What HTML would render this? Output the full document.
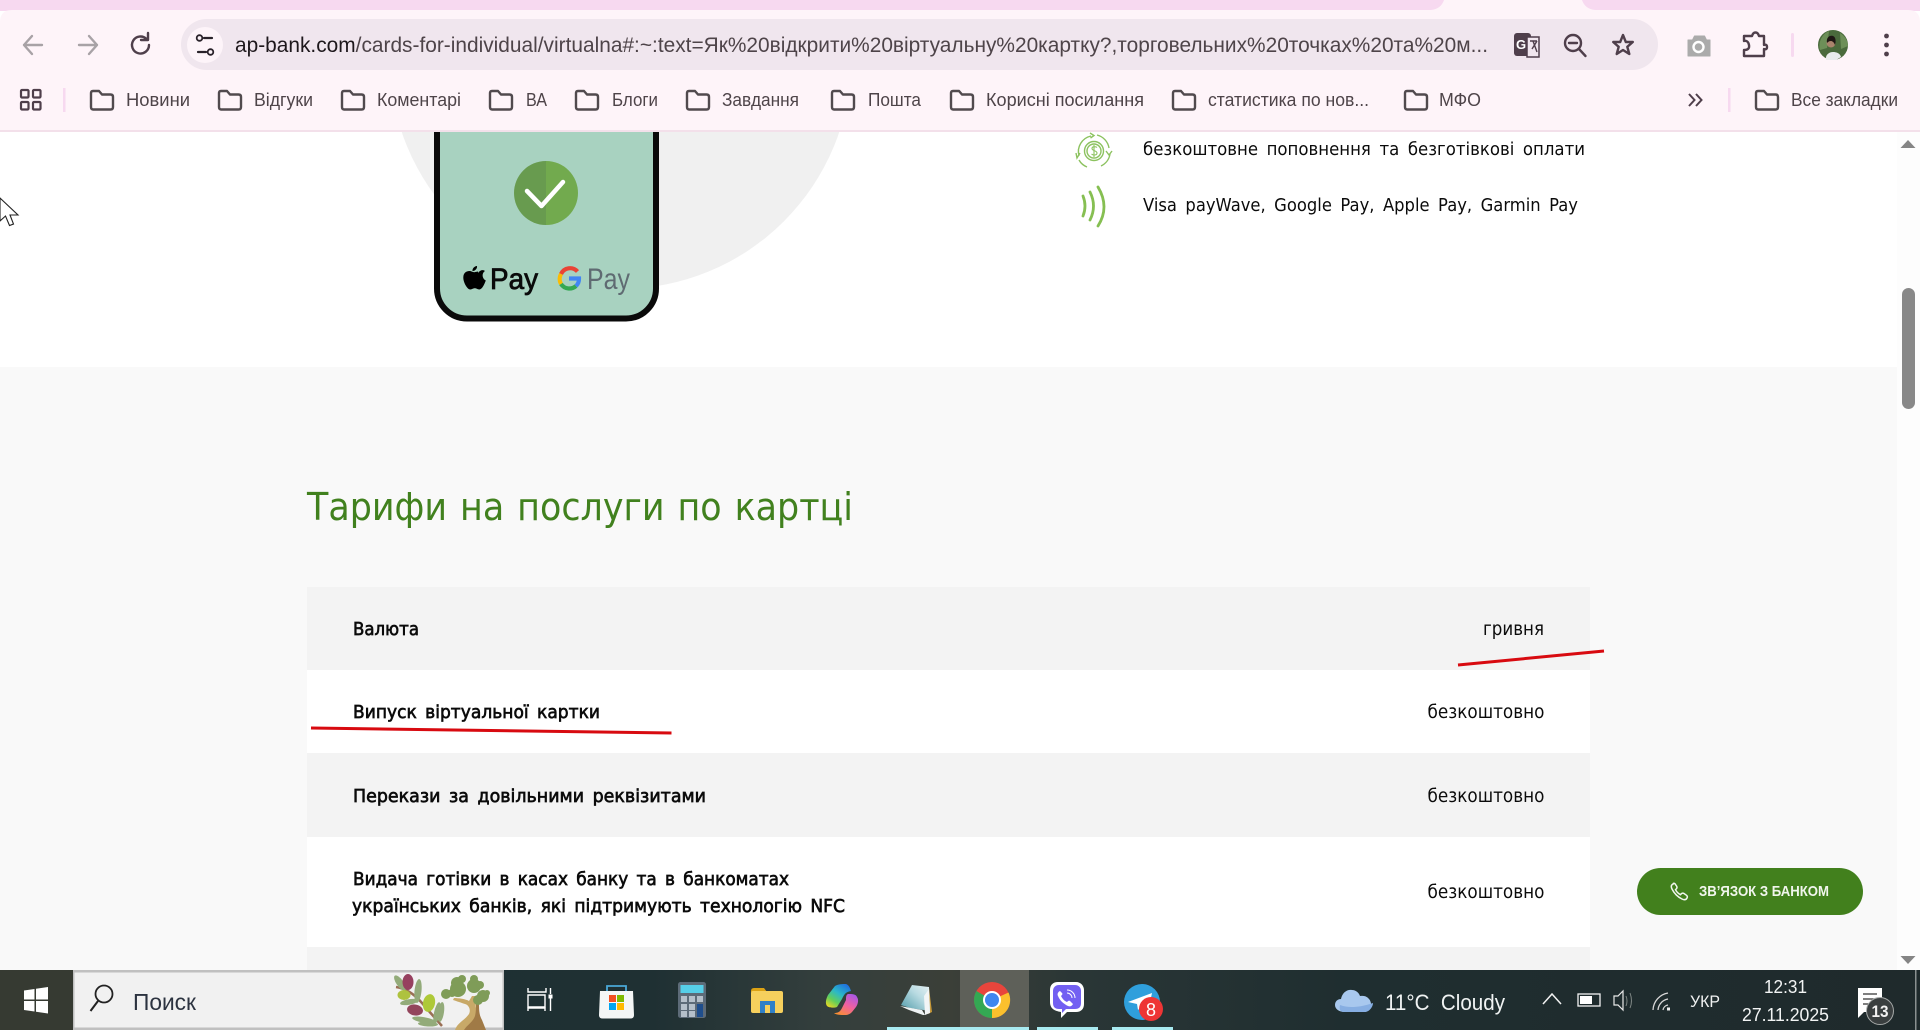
<!DOCTYPE html>
<html lang="uk">
<head>
<meta charset="utf-8">
<title>ap-bank.com</title>
<style>
html,body{margin:0;padding:0;width:1920px;height:1030px;overflow:hidden;background:#fff}
svg{display:block;position:absolute;left:0;top:0}
text{font-family:"Liberation Sans","Noto Sans CJK SC",sans-serif}
.o{font-family:"DejaVu Sans","Liberation Sans",sans-serif;fill:#0b0b0b}
.b{font-family:"DejaVu Sans","Liberation Sans",sans-serif;fill:#0b0b0b;stroke:#0b0b0b;stroke-width:.65px}
.bm{font-size:18px;fill:#4e4449}
.ic{fill:none;stroke:#4f3f4b;stroke-width:2.4;stroke-linecap:round;stroke-linejoin:round}
</style>
</head>
<body>
<svg width="1920" height="1030" viewBox="0 0 1920 1030" xmlns="http://www.w3.org/2000/svg">
<defs>
<symbol id="f" viewBox="0 0 25 22" overflow="visible"><path d="M2 4.5Q2 2 4 2H10L13 5.5H21.500Q24 5.500 24 8V18Q24 20.500 21.500 20.500H4Q2 20.500 2 18Z" fill="none" stroke="#514a4e" stroke-width="2.400" stroke-linejoin="round"/></symbol>
<linearGradient id="tg" x1="0" x2="1" y1="0" y2="0">
<stop offset="0" stop-color="#1d2f33"/><stop offset=".34" stop-color="#1f3033"/><stop offset=".43" stop-color="#343f3d"/><stop offset=".495" stop-color="#3b3f38"/><stop offset=".56" stop-color="#2a3636"/><stop offset=".7" stop-color="#1f2e30"/><stop offset="1" stop-color="#1f2a2c"/></linearGradient>
<linearGradient id="cp1" x1=".8" x2=".1" y1="0" y2="1"><stop offset="0" stop-color="#1f6fe0"/><stop offset=".4" stop-color="#2bb8c8"/><stop offset=".7" stop-color="#62cf5a"/><stop offset="1" stop-color="#f4d820"/></linearGradient>
<linearGradient id="cp2" x1=".8" x2=".2" y1="0" y2="1"><stop offset="0" stop-color="#a858e8"/><stop offset=".5" stop-color="#f060a0"/><stop offset="1" stop-color="#f89030"/></linearGradient>
<linearGradient id="np" x1="0" x2="1" y1="1" y2="0"><stop offset="0" stop-color="#4f9aa8"/><stop offset=".6" stop-color="#b9dbe2"/><stop offset="1" stop-color="#e8f2f4"/></linearGradient>
</defs>

<!-- page -->
<rect x="0" y="130" width="1920" height="840" fill="#fff"/>
<circle cx="620.500" cy="58" r="231" fill="#f0f0f0"/>
<rect x="437" y="100" width="219" height="218.500" rx="30" fill="#a8d2c0" stroke="#0a0a0a" stroke-width="6"/>
<path d="M546 161a32 32 0 0 0 0 64z" fill="#689b4f"/>
<path d="M546 161a32 32 0 0 1 0 64z" fill="#72aa4e"/>
<path d="M527 191L541.500 206L563 182" fill="none" stroke="#fff" stroke-width="4.500" stroke-linecap="round" stroke-linejoin="round"/>
<path d="M478 273c2-3 5-3.500 7-2-3 1.800-3.500 7 .8 9.500-1.500 4-3.800 9-6.500 9-1.800 0-2.500-1.200-4.500-1.200s-2.800 1.200-4.500 1.200c-3 0-7-7-7-12 0-5 3.500-6.500 6-6.500 2 0 3.500 1.200 4.800 1.200 1 0 2-.5 4-.7z M477 266c.5 2.500-2 5.200-4.500 5-.4-2.400 2-5 4.500-5z" fill="#000"/>
<text x="490" y="289" font-size="30" fill="#0a0a0a" stroke="#0a0a0a" stroke-width=".8" textLength="48" lengthAdjust="spacingAndGlyphs">Pay</text>
<g fill="none" stroke-width="4.200">
<path d="M577.500 271.500A10 10 0 0 0 561 274" stroke="#ea4335"/>
<path d="M561 274A10 10 0 0 0 561 284" stroke="#fbbc04"/>
<path d="M561 284A10 10 0 0 0 576 286" stroke="#34a853"/>
<path d="M576 286A10 10 0 0 0 579 278.500H569" stroke="#4285f4"/>
</g>
<text x="587" y="289" font-size="30" fill="#5f6b72" textLength="43" lengthAdjust="spacingAndGlyphs">Pay</text>

<!-- feature icons -->
<g fill="none" stroke="#8cc25f" stroke-width="1.400">
<circle cx="1094" cy="151" r="9.500"/>
<circle cx="1094" cy="151" r="7"/>
<path d="M1094 145v12M1097 147.500c-1-1-5-1.500-5 1s5 2 5 4.500-4 2.500-5.500 1" stroke-width="1.100"/>
<path d="M1079 156a16 16 0 0 1 12-20M1097 135a16 16 0 0 1 12 13M1110 154a16 16 0 0 1-9 12M1087 167a16 16 0 0 1-8-7M1090 133l4 2.500-3.500 2.500M1106 151l3 4 3-4M1080 153l-3 5-1-5"/>
</g>
<g fill="none" stroke="#86bf52" stroke-width="2.800" stroke-linecap="round">
<path d="M1083 196q4 10 0 20M1090 192q7 14 0 28M1098 187q12 20 0 39"/>
</g>
<text class="o" x="1143" y="155" font-size="17.500" word-spacing="3.500" textLength="442" lengthAdjust="spacingAndGlyphs">безкоштовне поповнення та безготівкові оплати</text>
<text class="o" x="1143" y="211" font-size="17.500" word-spacing="3.500" textLength="435" lengthAdjust="spacingAndGlyphs">Visa payWave, Google Pay, Apple Pay, Garmin Pay</text>

<!-- tariff section -->
<rect x="0" y="367" width="1897" height="603" fill="#f9f9f9"/>
<rect x="1897" y="132" width="23" height="838" fill="#fdfdfd"/>
<text x="307" y="520" font-size="38" fill="#41811e" word-spacing="2" textLength="546" lengthAdjust="spacingAndGlyphs" style="font-family:'DejaVu Sans',sans-serif;font-weight:400">Тарифи на послуги по картці</text>
<rect x="307" y="587" width="1283" height="83" fill="#f3f3f3"/>
<rect x="307" y="670" width="1283" height="83" fill="#fff"/>
<rect x="307" y="753" width="1283" height="84" fill="#f3f3f3"/>
<rect x="307" y="837" width="1283" height="110" fill="#fff"/>
<rect x="307" y="947" width="1283" height="23" fill="#f3f3f3"/>
<text class="b" x="353" y="635" font-size="17.500" textLength="66" lengthAdjust="spacingAndGlyphs">Валюта</text>
<text class="b" x="353" y="718" font-size="17.500" word-spacing="3" textLength="247" lengthAdjust="spacingAndGlyphs">Випуск віртуальної картки</text>
<text class="b" x="353" y="802" font-size="17.500" word-spacing="3" textLength="353" lengthAdjust="spacingAndGlyphs">Перекази за довільними реквізитами</text>
<text class="b" x="353" y="885" font-size="17.500" word-spacing="3" textLength="436" lengthAdjust="spacingAndGlyphs">Видача готівки в касах банку та в банкоматах</text>
<text class="b" x="352" y="912" font-size="17.500" word-spacing="3" textLength="493" lengthAdjust="spacingAndGlyphs">українських банків, які підтримують технологію NFC</text>
<text class="o" x="1483" y="635" font-size="18.500" textLength="61" lengthAdjust="spacingAndGlyphs">гривня</text>
<text class="o" x="1427.500" y="718" font-size="18.500" textLength="117" lengthAdjust="spacingAndGlyphs">безкоштовно</text>
<text class="o" x="1427.500" y="802" font-size="18.500" textLength="117" lengthAdjust="spacingAndGlyphs">безкоштовно</text>
<text class="o" x="1427.500" y="898" font-size="18.500" textLength="117" lengthAdjust="spacingAndGlyphs">безкоштовно</text>
<path d="M311 728L671.500 733" stroke="#d80a10" stroke-width="3"/>
<path d="M1458 665L1604 651" stroke="#d80a10" stroke-width="3"/>

<!-- contact button -->
<rect x="1637" y="868" width="226" height="47" rx="23.500" fill="#42801d"/>
<path d="M1673 884c-2 1-2 3-1 5 2 4 6 8 10 10 2 1 4 1 5-1 .6-1 .4-2-.5-2.700l-2.500-1.800c-1-.6-2-.5-2.800.4l-.7.8c-2-1-4-3-5-5l.8-.8c.8-.8.9-1.800.3-2.800l-1.600-2.300c-.7-.8-1.800-.7-2 .2z" fill="none" stroke="#f1f6ee" stroke-width="1.500"/>
<text x="1699" y="896" font-size="15" font-weight="700" fill="#f0f5ec" textLength="130" lengthAdjust="spacingAndGlyphs">ЗВ’ЯЗОК З БАНКОМ</text>

<!-- scrollbar -->
<path d="M1908 140l7.500 8h-15z" fill="#858585"/>
<rect x="1902" y="288" width="13" height="121" rx="6.500" fill="#888"/>
<path d="M1908 964l7.500-8h-15z" fill="#858585"/>

<!-- cursor -->
<path d="M0 198L18 215H10L13.500 224L9.500 225.500L5.500 216L0 221Z" fill="#fff" stroke="#222" stroke-width="1.100"/>

<!-- browser chrome -->
<rect x="0" y="0" width="1920" height="11" fill="#f7d9f0"/>
<path d="M0 130V22Q0 10 12 10H1908Q1920 10 1920 22V130Z" fill="#fef4f9"/>
<path d="M1431 10Q1441 9 1444 0H1582Q1585 9 1595 10Z" fill="#fef4f9"/>
<rect x="0" y="130" width="1920" height="2" fill="#f3e0ea"/>
<rect x="181" y="19" width="1477" height="51" rx="25.500" fill="#f0e6ee"/>
<circle cx="205" cy="45" r="18" fill="#fdf4f9"/>

<!-- nav -->
<g fill="none" stroke-width="2.400" stroke-linecap="round" stroke-linejoin="round">
<path d="M42 45H24M32 36L24 45L32 54" stroke="#a8a2a6"/>
<path d="M79 45H97M89 36L97 45L89 54" stroke="#a8a2a6"/>
<path d="M149 45a8.500 8.500 0 1 1-2.500-6M148 33v7h-7" stroke="#4f3f4b"/>
<path d="M204 38h8M198 52h8" stroke="#29222a" stroke-width="2.200"/>
<circle cx="199.500" cy="38" r="2.800" stroke="#29222a" stroke-width="1.800"/>
<circle cx="210.500" cy="52" r="2.800" stroke="#29222a" stroke-width="1.800"/>
</g>
<text x="235" y="52" font-size="21" fill="#4e4449" textLength="1253" lengthAdjust="spacingAndGlyphs"><tspan fill="#1e181c">ap-bank.com</tspan>/cards-for-individual/virtualna#:~:text=Як%20відкрити%20віртуальну%20картку?,торговельних%20точках%20та%20м...</text>

<!-- right toolbar icons -->
<path d="M1517 33h11a3 3 0 0 1 3 3v20h-14a3 3 0 0 1-3-3V36a3 3 0 0 1 3-3z" fill="#4f3f4b"/>
<rect x="1527" y="37" width="12" height="20" fill="#f0e6ee" stroke="#4f3f4b" stroke-width="1.500"/>
<text x="1516" y="49" font-size="13" font-weight="700" fill="#fff">G</text>
<path d="M1530 41h7M1533 41l4 11M1537 41l-5 8" stroke="#4f3f4b" stroke-width="1.400" fill="none"/>
<g class="ic"><circle cx="1573" cy="43" r="8"/><path d="M1569 43h8M1579 49l6.500 7"/><path d="M1623 35l2.800 7h7l-5.500 4.800 2 7.200-6.300-4-6.300 4 2-7.200-5.500-4.800h7z"/></g>
<path d="M1688 40h4.500l2-4h10l2 4h3.500v16h-22z" fill="#ababab" stroke="#ababab" stroke-width="1" stroke-linejoin="round"/>
<circle cx="1698.500" cy="47" r="5" fill="#ababab" stroke="#fff" stroke-width="2.400"/>
<path class="ic" d="M1744 36h8q1-3.500 3.500-3.500T1759 36h5v9q3-1 3 2t-3 2v7h-20v-6q6 0 5-5t-5-4z"/>
<rect x="1791" y="33" width="3" height="24" fill="#f7d9f0" rx="1.500"/>
<circle cx="1833" cy="45" r="15" fill="#4a6a3c"/>
<path d="M1820 50c-2-8 2-16 9-19l-2 17zM1840 33c5 3 8 8 8 13l-7 3z" fill="#6d8f58"/>
<path d="M1826 60c-1-5 3-8 7-8 3 0 7 1 8 5l-5 3z" fill="#e9ecec"/>
<circle cx="1831" cy="43" r="4.500" fill="#a9836c"/>
<path d="M1827 43c-1-6 3-8 6-7 3 1 3 6 2 9-1-3-3-4-4-4-2 0-3 1-4 2z" fill="#1f1714"/>
<g fill="#4f3f4b"><circle cx="1886.500" cy="36" r="2.400"/><circle cx="1886.500" cy="45" r="2.400"/><circle cx="1886.500" cy="54" r="2.400"/></g>

<!-- bookmarks -->
<g fill="none" stroke="#4f3f4b" stroke-width="2.200"><rect x="21" y="90" width="7.500" height="7.500" rx="1"/><rect x="33" y="90" width="7.500" height="7.500" rx="1"/><rect x="21" y="102" width="7.500" height="7.500" rx="1"/><rect x="33" y="102" width="7.500" height="7.500" rx="1"/></g>
<rect x="63" y="88" width="2.500" height="24" fill="#f7d9f0"/>
<use href="#f" x="89" y="89" width="25" height="22"/>
<text class="bm" x="126" y="106" textLength="64" lengthAdjust="spacingAndGlyphs">Новини</text>
<use href="#f" x="217" y="89" width="25" height="22"/>
<text class="bm" x="254" y="106" textLength="59" lengthAdjust="spacingAndGlyphs">Відгуки</text>
<use href="#f" x="340" y="89" width="25" height="22"/>
<text class="bm" x="377" y="106" textLength="84" lengthAdjust="spacingAndGlyphs">Коментарі</text>
<use href="#f" x="488" y="89" width="25" height="22"/>
<text class="bm" x="526" y="106" textLength="21" lengthAdjust="spacingAndGlyphs">ВА</text>
<use href="#f" x="574" y="89" width="25" height="22"/>
<text class="bm" x="612" y="106" textLength="46" lengthAdjust="spacingAndGlyphs">Блоги</text>
<use href="#f" x="685" y="89" width="25" height="22"/>
<text class="bm" x="722" y="106" textLength="77" lengthAdjust="spacingAndGlyphs">Завдання</text>
<use href="#f" x="830" y="89" width="25" height="22"/>
<text class="bm" x="868" y="106" textLength="53" lengthAdjust="spacingAndGlyphs">Пошта</text>
<use href="#f" x="949" y="89" width="25" height="22"/>
<text class="bm" x="986" y="106" textLength="158" lengthAdjust="spacingAndGlyphs">Корисні посилання</text>
<use href="#f" x="1171" y="89" width="25" height="22"/>
<text class="bm" x="1208" y="106" textLength="161" lengthAdjust="spacingAndGlyphs">статистика по нов...</text>
<use href="#f" x="1403" y="89" width="25" height="22"/>
<text class="bm" x="1439" y="106" textLength="42" lengthAdjust="spacingAndGlyphs">МФО</text>
<path d="M1689 94l5.500 6-5.500 6M1696 94l5.500 6-5.500 6" fill="none" stroke="#4f3f4b" stroke-width="2"/>
<rect x="1728" y="88" width="2.500" height="24" fill="#f7d9f0"/>
<use href="#f" x="1754" y="89" width="25" height="22"/>
<text class="bm" x="1791" y="106" textLength="107" lengthAdjust="spacingAndGlyphs">Все закладки</text>

<!-- taskbar -->
<rect x="0" y="970" width="1920" height="60" fill="url(#tg)"/>
<rect x="0" y="970" width="73" height="60" fill="#363a32"/>
<g fill="#fff"><path d="M24 990.500l10.500-1.500v10.500H24zM36 988.800l12-1.800v12.500H36zM24 1001h10.500v10.500L24 1010zM36 1001h12v12.500l-12-1.800z"/></g>
<rect x="73" y="970" width="431" height="60" fill="#f1f1f1"/>
<rect x="73" y="970" width="431" height="2.500" fill="#c0c0c0"/>
<rect x="73" y="1027.500" width="431" height="2.500" fill="#c0c0c0"/>
<rect x="73" y="970" width="1.500" height="60" fill="#c0c0c0"/>
<rect x="502.500" y="970" width="1.500" height="60" fill="#c0c0c0"/>
<circle cx="104" cy="994" r="8.500" fill="none" stroke="#222" stroke-width="1.800"/>
<path d="M98 1001L90.500 1011" stroke="#222" stroke-width="2"/>
<text x="133" y="1010" font-size="23" fill="#2c3340" textLength="63" lengthAdjust="spacingAndGlyphs">Поиск</text>

<!-- olive branch -->
<path d="M396 987q14 2 26 16t20 23" stroke="#9a6f55" stroke-width="2.500" fill="none"/>
<g fill="#93ab7a"><ellipse cx="400" cy="983" rx="3.500" ry="9" transform="rotate(-35 400 983)"/><ellipse cx="418" cy="991" rx="3.500" ry="12" transform="rotate(6 418 991)"/><ellipse cx="409" cy="1002" rx="9" ry="2.800" transform="rotate(-10 409 1002)"/><ellipse cx="437" cy="1013" rx="3" ry="11" transform="rotate(12 437 1013)"/><ellipse cx="441" cy="1012" rx="3" ry="10" transform="rotate(8 441 1012)"/><ellipse cx="424" cy="1020" rx="12" ry="2.800" transform="rotate(10 424 1020)"/><ellipse cx="428" cy="1024" rx="10" ry="2.500" transform="rotate(3 428 1024)"/></g>
<ellipse cx="408" cy="982" rx="5.500" ry="8" fill="#96405f"/>
<ellipse cx="404" cy="995" rx="6.500" ry="5" fill="#aec23e"/>
<ellipse cx="429" cy="1003" rx="6" ry="9" fill="#aec938" transform="rotate(12 429 1003)"/>
<ellipse cx="415" cy="1010" rx="8" ry="5.500" fill="#93455c" transform="rotate(10 415 1010)"/>
<!-- olive tree -->
<path d="M455 1030c2-7 10-10 14-16 2-4 0-9-4-10-3-1-9-3-12-4l1-2c4 0 12 1 15 3l3-5h6c-1 5-3 8-2 12 0 6 3 14 8 22z" fill="#c8a968"/>
<path d="M464 1030c3-5 9-8 11-14 1-4 1-8 1-12l3-1c0 6 0 12 3 17l4 10z" fill="#a07a46"/>
<g fill="#7f9c58"><circle cx="446" cy="994" r="5"/><circle cx="452" cy="993" r="4"/><ellipse cx="458" cy="989" rx="8" ry="8"/><ellipse cx="457" cy="983" rx="6" ry="6"/><circle cx="462" cy="979" r="4"/><circle cx="474" cy="986" r="7"/><circle cx="474" cy="979" r="4"/><circle cx="480" cy="985" r="4"/><circle cx="483" cy="996" r="6"/><circle cx="478" cy="1000" r="5"/><circle cx="487" cy="993" r="3"/></g>

<!-- task view -->
<g fill="none" stroke="#fff" stroke-width="1.400"><path d="M528 988v4h18v-4"/><path d="M528 995h17v12h-17z"/><path d="M528 1011v-3h17v3"/></g>
<path d="M550.500 988v6M550.500 998v13" stroke="#fff" stroke-width="1.400"/><rect x="548.500" y="994.500" width="4" height="4" fill="#fff"/>

<!-- store -->
<path d="M607 991v-5h19v5" fill="none" stroke="#4aa8d8" stroke-width="1.800"/>
<path d="M600 991h33l1 24q0 3.500-3.500 3.500h-28q-3.500 0-3.500-3.500z" fill="#f4f6f6"/>
<rect x="609" y="995" width="7" height="7" fill="#f25022"/><rect x="617" y="995" width="7" height="7" fill="#7fba00"/><rect x="609" y="1003" width="7" height="7" fill="#00a4ef"/><rect x="617" y="1003" width="7" height="7" fill="#ffb900"/>

<!-- calculator -->
<rect x="678" y="982" width="28" height="36" rx="2.500" fill="#5d6b78"/>
<rect x="680.500" y="985" width="23" height="8" fill="#56cfe8"/>
<g fill="#b5c0ca"><rect x="681" y="996" width="6" height="6"/><rect x="689" y="996" width="6" height="6"/><rect x="697" y="996" width="6" height="6"/><rect x="681" y="1004" width="6" height="6"/><rect x="689" y="1004" width="6" height="6"/><rect x="681" y="1011" width="6" height="6"/><rect x="689" y="1011" width="6" height="6"/></g>
<rect x="697" y="1004" width="6" height="13" fill="#1f4e8c"/>

<!-- folder -->
<path d="M751 991q0-3 3-3h10l3 4h-16z" fill="#dca214"/>
<rect x="751" y="991" width="32" height="22" rx="2" fill="#f6d05d"/>
<rect x="760" y="1001" width="15" height="12" fill="#2f80c8"/>
<rect x="765" y="1005" width="5" height="8" fill="#f6d05d"/>

<!-- copilot -->
<path d="M835 986c3-2 8-2 11-2 3 1 4 4 5 7-6 1-7 4-9 8l-5 8c-2 1-8 1-10-1-2-3-1-7 1-11z" fill="url(#cp1)"/>
<path d="M848 994c4 0 8 0 9 3 2 3 1 7-1 10l-4 5c-2 2-4 3-7 3-4 0-9 0-11-2 4 0 6-1 8-5l4-8c0-3 0-5 2-6z" fill="url(#cp2)"/>

<!-- notepad -->
<path d="M929 988l3 24-4 2z" fill="#c89a3a"/>
<path d="M912 985l17 2 1 24-20-3-9-3z" fill="url(#np)"/>
<path d="M900 1006l22 4 3 5-2 0-14-5z" fill="#eef3f4"/>
<path d="M924 996l5-7 1 24-5 2z" fill="#f2f5f6"/>
<rect x="887" y="1027" width="74" height="3" fill="#a8eaf0"/>

<!-- chrome -->
<rect x="960" y="970" width="69" height="60" fill="#5e6059"/>
<rect x="960" y="1027" width="69" height="3" fill="#a8eaf0"/>
<circle cx="992" cy="1000" r="18" fill="#e8453c"/>
<path d="M976.400 991L992 1000L992 1018A18 18 0 0 1 976.400 991z" fill="#34a853"/>
<path d="M1008.500 992.500L992 1000L992 1018A18 18 0 0 0 1008.500 992.500z" fill="#fbc02d"/>
<circle cx="992" cy="1000" r="9" fill="#fff"/>
<circle cx="992" cy="1000" r="7" fill="#3f86ee"/>

<!-- viber -->
<path d="M1058 982h18c5 0 8 4 8 8v14c0 5-3 8-8 8h-9l-6 6v-6c-6-1-11-3-11-10V990c0-5 3-8 8-8z" fill="#fff"/>
<path d="M1059 985h16c4 0 6 3 6 6v12c0 4-2 6-6 6h-9l-4 4v-4h-3c-4 0-6-2-6-6V991c0-3 2-6 6-6z" fill="#7360f2"/>
<path d="M1060 991c-2 1-3 3-2 5 2 5 6 8 10 10 2 1 4 0 5-2l-3-3c-1-1-2 0-3 1-3-1-5-4-6-6 1-1 2-2 1-3z" fill="#fff"/>
<path d="M1067 990a8 8 0 0 1 8 8M1067 993a5 5 0 0 1 5 5" fill="none" stroke="#fff" stroke-width="1"/>
<rect x="1037" y="1027" width="61" height="3" fill="#a8eaf0"/>

<!-- telegram -->
<circle cx="1142" cy="1002" r="18" fill="#2f9fdc"/>
<path d="M1128 1002l24-9-4 19-7-5-3 3-1-6z" fill="#fff"/>
<circle cx="1151" cy="1009" r="12" fill="#ee3535"/>
<text x="1151" y="1016" font-size="18" fill="#fff" text-anchor="middle">8</text>
<rect x="1112" y="1027" width="61" height="3" fill="#a8eaf0"/>

<!-- weather -->
<path d="M1345 1012c-6 0-10-3-10-7 0-4 3-6 6-6 1-6 6-10 11-9 4 0 7 3 8 6 1 0 6-1 9 3 3 3 4 13-6 13z" fill="#a8c8ee"/>
<path d="M1340 1005c8 3 18 3 33-2 0 4-4 9-8 9h-21c-4 0-5-3-4-7z" fill="#86aee2"/>
<text x="1385" y="1010" font-size="22" fill="#f0f3f3" textLength="120" lengthAdjust="spacingAndGlyphs" xml:space="preserve">11°C  Cloudy</text>

<!-- tray -->
<path d="M1543 1004L1552 994L1561 1004" fill="none" stroke="#f2f2f2" stroke-width="1.500"/>
<rect x="1578" y="994" width="22" height="12" fill="none" stroke="#f2f2f2" stroke-width="1.300"/>
<rect x="1580" y="996" width="12" height="8" fill="#fff"/>
<path d="M1614 996h4l5-5v19l-5-5h-4z" fill="none" stroke="#e8e8e8" stroke-width="1.200"/>
<path d="M1626 996q2 5 0 10M1630 993q3 8 0 15" fill="none" stroke="#7e8684" stroke-width="1"/>
<g fill="none" stroke="#d8d8d8" stroke-width="1.300"><path d="M1653 1010a18 18 0 0 1 15-17M1658 1010a12 12 0 0 1 10-11M1663 1010a6 6 0 0 1 5-5"/></g>
<rect x="1667" y="1007.500" width="3" height="3" fill="#eee"/>
<text x="1690" y="1007" font-size="17" fill="#f0f2f2" textLength="30" lengthAdjust="spacingAndGlyphs">УКР</text>
<text x="1764" y="993" font-size="18.500" fill="#f2f4f4" textLength="43" lengthAdjust="spacingAndGlyphs">12:31</text>
<text x="1742" y="1021" font-size="18.500" fill="#f2f4f4" textLength="87" lengthAdjust="spacingAndGlyphs">27.11.2025</text>
<path d="M1858 988h24v24h-18l-6 6z" fill="#fff"/>
<path d="M1863 994h14M1863 999h14M1863 1004h14" stroke="#333" stroke-width="1.300"/>
<circle cx="1880" cy="1011" r="13.500" fill="#3a3f40" stroke="#a6a9a8" stroke-width="1"/>
<text x="1880" y="1017" font-size="17" font-weight="700" fill="#f2f2f2" text-anchor="middle" textLength="17" lengthAdjust="spacingAndGlyphs">13</text>
<rect x="1915" y="970" width="1.500" height="60" fill="#8a9090"/>
</svg>
</body>
</html>
